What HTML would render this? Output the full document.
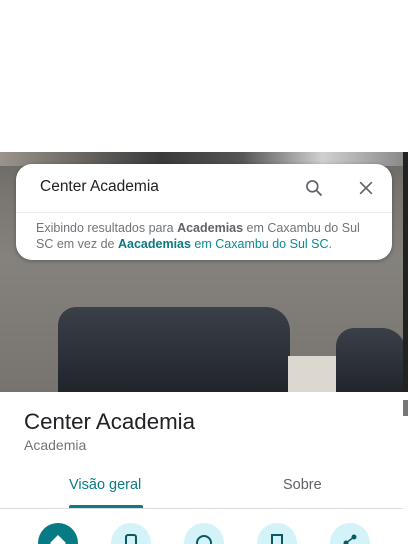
<!DOCTYPE html>
<html style="height:544px;overflow:hidden"><head><style>
body{margin:0;width:408px;height:544px;overflow:hidden;background:#fff;font-family:"Liberation Sans",Arial,sans-serif;position:relative}
.photo{position:absolute;left:0;top:152px;width:403px;height:240px;background:linear-gradient(#6c6965 0%,#7a7772 20%,#85827d 45%,#77746f 100%);overflow:hidden}
.top{position:absolute;left:0;top:0;width:403px;height:14px;background:linear-gradient(90deg,#9a948c,#3a3a3a 40%,#555 60%,#cfd0d0 80%,#8a8a8a)}
.cush{position:absolute;background:linear-gradient(#3b4048,#2a2e35 60%,#1f2227);border-radius:18px 24px 6px 6px}
.sb{position:absolute;left:403px;top:152px;width:5px;height:240px;background:#222}
.card{position:absolute;left:16px;top:164px;width:376px;height:96px;background:#fff;border-radius:16px;box-shadow:0 1px 4px rgba(0,0,0,.3)}
.q{position:absolute;left:24px;top:14px;font-size:15.5px;color:#202124}
.hr{position:absolute;left:0;right:0;top:48px;border-top:1px solid #e8eaed}
.msg{position:absolute;left:20px;top:56px;font-size:12.5px;line-height:16px;color:#70757a}
.msg b{color:#5f6368}.t{color:#0b8a94}.t b{color:#0b7a85}
.circ{position:absolute;top:523px;width:40px;height:40px;border-radius:50%;background:#d3f3f8}
</style></head><body>
<div class="photo">
<div class="top"></div>
<div class="cush" style="left:58px;top:155px;width:232px;height:92px"></div>
<div style="position:absolute;left:288px;top:204px;width:48px;height:40px;background:#dcd8d0"></div>
<div class="cush" style="left:336px;top:176px;width:70px;height:70px"></div>
</div>
<div class="sb"></div>
<div class="card">
<div class="q">Center Academia</div>
<svg style="position:absolute;left:288px;top:14px" width="20" height="20" viewBox="0 0 24 24"><circle cx="10" cy="10" r="6.5" fill="none" stroke="#5f6368" stroke-width="2"/><path d="M15 15l6 6" stroke="#5f6368" stroke-width="2.2"/></svg>
<svg style="position:absolute;left:340px;top:14px" width="20" height="20" viewBox="0 0 24 24"><path d="M5 5l14 14M19 5L5 19" stroke="#5f6368" stroke-width="2"/></svg>
<div class="hr"></div>
<div class="msg">Exibindo resultados para <b>Academias</b> em Caxambu do Sul<br>SC em vez de <span class="t"><b>Aacademias</b> em Caxambu do Sul SC</span>.</div>
</div>
<div style="position:absolute;left:403px;top:400px;width:5px;height:16px;background:#777"></div>
<div style="position:absolute;left:24px;top:409px;font-size:22.3px;color:#202124">Center Academia</div>
<div style="position:absolute;left:24px;top:437px;font-size:14px;color:#70757a">Academia</div>
<div style="position:absolute;left:69px;top:477px;font-size:14.5px;color:#0b7a85">Visão geral</div>
<div style="position:absolute;left:283px;top:477px;font-size:14.5px;color:#5f6368">Sobre</div>
<div style="position:absolute;left:0;top:508px;width:403px;border-top:1px solid #dadce0"></div>
<div style="position:absolute;left:69px;top:505px;width:74px;height:3px;background:#0b7a85;border-radius:2px 2px 0 0"></div>
<div class="circ" style="left:38px;background:#087a83"><svg width="40" height="40"><path d="M20 12l8 8-8 8-8-8z" fill="#fff"/></svg></div>
<div class="circ" style="left:111px"><svg width="40" height="40"><rect x="15" y="12" width="10" height="16" rx="2" fill="none" stroke="#0b5a60" stroke-width="2"/></svg></div>
<div class="circ" style="left:184px"><svg width="40" height="40"><circle cx="20" cy="20" r="7" fill="none" stroke="#0b5a60" stroke-width="2"/></svg></div>
<div class="circ" style="left:257px"><svg width="40" height="40"><rect x="15" y="12" width="10" height="16" fill="none" stroke="#0b5a60" stroke-width="2"/></svg></div>
<div class="circ" style="left:330px"><svg width="40" height="40"><circle cx="24" cy="14" r="2.5" fill="#0b5a60"/><circle cx="16" cy="20" r="2.5" fill="#0b5a60"/><path d="M16 20l8-6" stroke="#0b5a60" stroke-width="1.5"/></svg></div>
</body></html>
